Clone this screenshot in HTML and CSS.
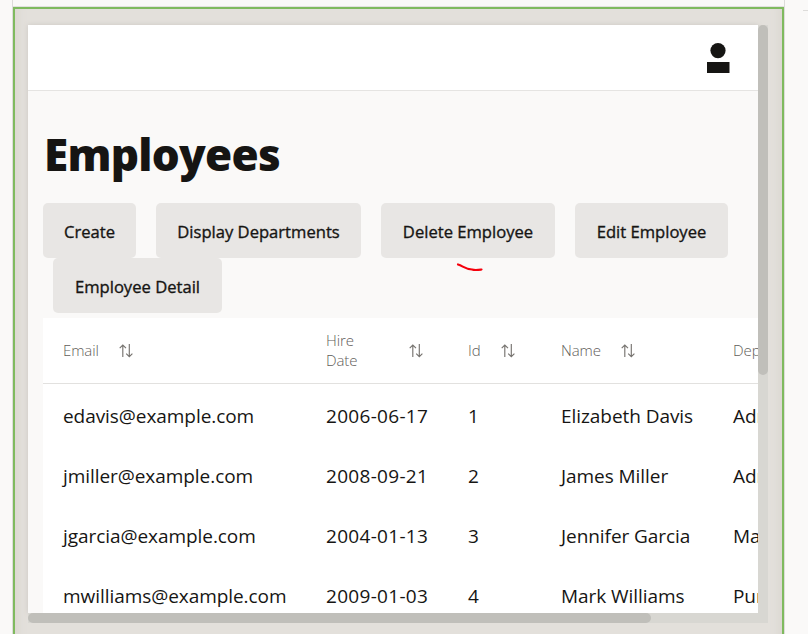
FILE: index.html
```
<!DOCTYPE html>
<html lang="en">
<head>
<meta charset="utf-8">
<title>Employees</title>
<link rel="stylesheet" href="styles.css">
</head>
<body>
<svg width="0" height="0" class="defs"><symbol id="sort" viewBox="0 0 14 14"><path d="M3.8 13V1.2M.7 4.2 3.8 1.1 7 4.2M10.3 0V12.6M7.2 9.6l3.1 3.1 3.1-3.1" fill="none" stroke="currentColor" stroke-width="1.15"/></symbol></svg>
<div class="editor">
  <main class="stage">
    <div class="device">
      <div class="view">
        <header class="topbar"><svg class="user" width="23" height="31" viewBox="0 0 23 31"><circle cx="11" cy="7.6" r="7.6"/><path d="M0 19h22.500v11H0z"/></svg></header>
        <h1><span>Employees</span></h1>
        <div class="actions">
          <button class="b-create"><span>Create</span></button>
          <button class="b-display"><span>Display Departments</span></button>
          <button class="b-delete"><span>Delete Employee</span></button>
          <button class="b-edit"><span>Edit Employee</span></button>
          <button class="b-detail"><span>Employee Detail</span></button>
          <svg class="mark" width="30" height="12" viewBox="0 0 30 12"><path d="M2 1.500C7 3 9 6 16 6.500C19 7.500 22 7 25.500 6.500" fill="none" stroke="#f5000c" stroke-width="2.2" stroke-linecap="round"/></svg>
        </div>
        <div class="table">
          <div class="row head">
            <div class="email"><span>Email</span><svg><use href="#sort"/></svg></div>
            <div class="date"><span>Hire<br>Date</span><svg><use href="#sort"/></svg></div>
            <div class="id"><span>Id</span><svg><use href="#sort"/></svg></div>
            <div class="name"><span>Name</span><svg><use href="#sort"/></svg></div>
            <div class="dept"><span>Department</span></div>
          </div>
          <div class="row"><div class="email">edavis@example.com</div><div class="date">2006-06-17</div><div class="id">1</div><div class="name">Elizabeth Davis</div><div class="dept">Administration</div></div>
          <div class="row"><div class="email">jmiller@example.com</div><div class="date">2008-09-21</div><div class="id">2</div><div class="name">James Miller</div><div class="dept">Administration</div></div>
          <div class="row"><div class="email">jgarcia@example.com</div><div class="date">2004-01-13</div><div class="id">3</div><div class="name">Jennifer Garcia</div><div class="dept">Marketing</div></div>
          <div class="row"><div class="email">mwilliams@example.com</div><div class="date">2009-01-03</div><div class="id">4</div><div class="name">Mark Williams</div><div class="dept">Purchasing</div></div>
        </div>
      </div>
      <div class="vbar"><i></i></div>
      <div class="hbar"><i></i></div>
    </div>
  </main>
  <aside class="side"></aside>
</div>
</body>
</html>
```
FILE: styles.css
```
* { box-sizing: border-box; }
body { margin: 0; height: 634px; overflow: hidden; background: #faf9f8; color: #161513; font-family: "Open Sans", sans-serif; }
.defs { display: block; height: 0; }
.editor { display: flex; width: 808px; height: 634px; padding-left: 12px; }
.stage { width: 773px; height: 640px; border: 1px solid #dddcda; border-top: 0; padding-top: 6px; flex: none; }
.stage::before { content: ""; display: block; height: 1px; background: #e2e1df; }
.device { height: 640px; border: 2px solid #7fba5f; border-bottom: 0; padding: 16px 14px 0 13px; background: #e3e0db; box-shadow: inset 12px 0 10px -9px #dad6d1, inset -12px 0 10px -9px #dad6d1; display: grid; grid-template: 588px 10px / 730px 10px; }
.view { overflow: hidden; background: #faf9f8; box-shadow: 0 0 5px #cbc8c3; }
.topbar { height: 66px; background: #fff; border-bottom: 1px solid #e5e4e2; display: flex; justify-content: flex-end; padding: 18px 28px 0 0; }
.user { fill: #161513; }
h1 { margin: 33px 0 0 16px; height: 79px; font-size: 44px; line-height: 61px; font-weight: 800; letter-spacing: -.75px; }
.actions { position: relative; display: flex; flex-wrap: wrap; column-gap: 20px; padding-left: 15px; height: 115px; align-content: flex-start; }
button { height: 55px; border: 0; border-radius: 5px; background: #e8e6e4; color: #161513; font: 400 16.6px/24px "Open Sans", sans-serif; -webkit-text-stroke: .35px #161513; padding: 2px 0 0; white-space: nowrap; }
.b-create { width: 93px; }
.b-display { width: 205px; }
.b-delete { width: 174px; }
.b-edit { width: 153px; }
.b-detail { width: 169px; margin-left: 10px; }
.mark { position: absolute; left: 428px; top: 60px; }
.table { margin-left: 15px; width: 1000px; padding-left: 20px; background: #fff; }
.row { display: grid; grid-template-columns: 263px 142px 93px 172px 200px; height: 60px; align-items: center; font-size: 19px; font-weight: 400; letter-spacing: -.06px; white-space: nowrap; padding-top: 3px; }
.date { letter-spacing: .3px; }
.head { height: 66px; font-size: 15px; line-height: 20px; color: #5f5d5a; font-weight: 300; border-bottom: 1px solid #e2e1df; margin-left: -20px; padding: 0 0 0 20px; }
.head > div { display: flex; align-items: center; gap: 20px; letter-spacing: -.1px; }
.head span { margin-top: -2px; }
.head svg { width: 14px; height: 14px; color: #777470; }
.head .date { justify-content: space-between; padding-right: 45px; }
.vbar, .hbar { background: #d8d7d2; }
.vbar i, .hbar i { display: block; background: #c0bfba; border-radius: 5px; }
.vbar i { height: 350px; }
.hbar { grid-column: 1 / 3; }
.hbar i { width: 623px; height: 10px; }
.side { flex: 1; padding: 10px 0 0 18px; }
.side::before { content: ""; display: block; height: 1px; background: #dddcda; }
```
